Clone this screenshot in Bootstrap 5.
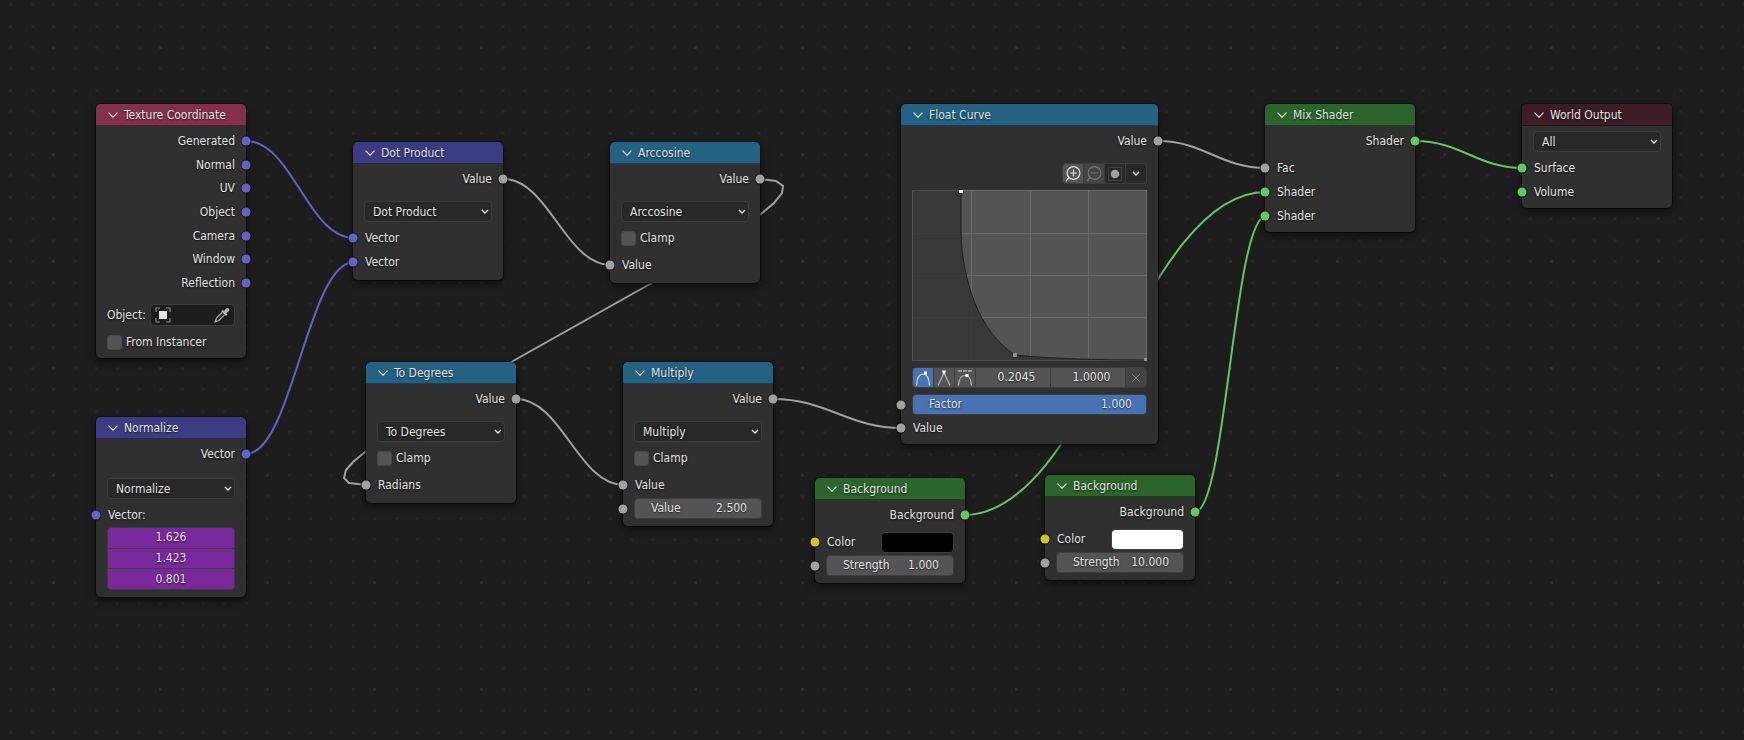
<!DOCTYPE html>
<html lang="en">
<head>
<meta charset="utf-8">
<meta name="viewport" content="width=device-width, initial-scale=1">
<title>World shader nodes</title>
<link href="https://cdn.jsdelivr.net/npm/bootstrap@5.3.0/dist/css/bootstrap.min.css" rel="stylesheet">
<style>
  body { background: #1d1d1d; color: #e2e2e2; font: 12px/22px "DejaVu Sans Condensed", "DejaVu Sans", sans-serif; text-shadow: 0 1px 2px rgba(0,0,0,.7); }
  .editor { min-height: 100vh; min-width: 1690px; }
  .wires { fill: none; stroke-width: 2; }
  .c-vec { --c: #6363c7; } .c-val { --c: #a1a1a1; } .c-shd { --c: #63c763; } .c-col { --c: #c7c729; }
  .wires .wire { stroke: var(--c); }

  .node { width: 150px; background: #303030; border-radius: 5px; box-shadow: 0 0 0 1px rgba(0,0,0,.35), 0 3px 8px rgba(0,0,0,.6); }
  .node-wide { width: 257px; }
  .node-head { height: 22px; padding: 0 0 0 12px; gap: 6px; border-radius: 5px 5px 0 0; border-bottom: 1px solid rgba(0,0,0,.35); background: var(--h); }
  .h-input { --h: #83314a; } .h-vec { --h: #3c3c83; } .h-conv { --h: #246283; } .h-shd { --h: #2b652b; } .h-out { --h: #3c1d26; }
  .node-head h2 { font-size: 12px; line-height: 22px; font-weight: 400; margin: 0; }
  .node-head svg { width: 10px; height: 6px; }
  .node-body { padding: 4px 11px 7px; }
  .pb-tight { padding-bottom: 5px; }
  .line { height: 22px; padding: 0; }
  .reach { margin-left: -11px; margin-right: -11px; padding: 0 11px 0 12px; }
  .reach-field { margin-left: -11px; margin-right: -11px; padding: 0 11px; }
  .outs { height: 164px; }
  .g2 { margin-top: 2px; } .g5 { margin-top: 5px; } .g6 { margin-top: 6px; } .g11 { margin-top: 11px; }
  .g13 { margin-top: 13px; } .g10 { margin-top: 10px; } .g1 { margin-top: 1px; }
  .pin { width: 9px; height: 9px; border-radius: 50%; background: var(--c); box-shadow: 0 0 0 1px rgba(20,20,20,.75); }

  .pick { --bs-form-select-bg-img: url("data:image/svg+xml,%3csvg xmlns='http://www.w3.org/2000/svg' viewBox='0 0 8 6'%3e%3cpath d='M1 1l3 3 3-3' fill='none' stroke='%23e2e2e2' stroke-width='1.4'/%3e%3c/svg%3e");
    height: 21px; padding: 0 16px 0 8px; font: inherit; line-height: 18px; color: inherit; background-color: #282828; background-size: 8px 6px; background-position: right 2px center; border: 1px solid #3d3d3d; border-radius: 4px; text-shadow: inherit; }
  .tick { width: 15px; height: 15px; margin: 0; background-color: #545454; border: 1px solid #484848; border-radius: 3px; }
  .tick + label { padding-left: 4px; }
  .num { height: 21px; padding: 0 14px 0 16px; background: #545454; border: 1px solid #3d3d3d; border-radius: 4px; line-height: 19px; }
  .num-full { background: #4772b3; }
  .num input, .trio input, .cell-in { min-width: 0; width: 60px; padding: 0; border: 0; background: transparent; color: inherit; font: inherit; line-height: 19px; text-shadow: inherit; }
  .trio { border-radius: 4px; overflow: hidden; border: 1px solid #3d3d3d; height: 63px; background: #3d3d3d; gap: 1px; }
  .trio input { flex: 1; width: 100%; text-align: center; background: #79299b; }
  .swatch { width: 73px; height: 21px; padding: 0; border: 1px solid #3d3d3d; border-radius: 4px; overflow: hidden; background: none; appearance: none; }
  .swatch::-webkit-color-swatch-wrapper { padding: 0; }
  .swatch::-webkit-color-swatch { border: 0; border-radius: 3px; }
  .idbox { width: 85px; height: 22px; padding: 0 4px; background: #1d1d1d; border: 1px solid #3d3d3d; border-radius: 4px; }
  .idbox button { border: 0; padding: 0; background: none; display: flex; color: #e2e2e2; }
  .idbox input { flex: 1; min-width: 0; height: 18px; border: 0; padding: 0; background: transparent; color: inherit; }
  .strip { height: 21px; border: 1px solid #3d3d3d; border-radius: 4px; overflow: hidden; gap: 1px; background: #3d3d3d; }
  .strip > * { background: #545454; }
  .strip button { width: 20px; border: 0; padding: 0; display: flex; align-items: center; justify-content: center; flex: none; }
  .strip .on { background: #4772b3; } .strip .dim { background: #444; } .strip .deep { background: #282828; }
  .cell-in { flex: 1; text-align: center; }
  .strip .cell-in { background: #545454; padding-left: 7px; }
  .plot { display: block; width: 100%; height: 171px; }
</style>
</head>
<body>
<main class="editor position-relative overflow-hidden">
  <svg class="wires position-absolute top-0 start-0 w-100 h-100" aria-hidden="true">
    <defs>
      <pattern id="dots" width="107" height="107" patternUnits="userSpaceOnUse">
        <g stroke="#252525" stroke-width="3" stroke-dasharray="3 19 3 18 3 19 3 18 3 18">
          <path d="M9 4.500H107M9 26.500H107M9 68.500H107M9 90.500H107M9 47.500H107"/>
        </g>
        <path d="M52 46h3v3h-3z" fill="#2c2c2c"/>
      </pattern>
    </defs>
    <rect width="100%" height="100%" fill="url(#dots)"/>
    <path class="wire c-vec" d="M246 141C292 141 308 238 354 238"/>
    <path class="wire c-vec" d="M246 454C292 454 308 262 354 262"/>
    <path class="wire c-val" d="M503 179C549 179 565 265 611 265"/>
    <path class="wire c-val" d="M760 179L776 181 783 186 782 193 774 203 761 214 650 284 513 361 365 452 353 462 346 470 344 478 349 483 367 485"/>
    <path class="wire c-val" d="M516 399C562 399 578 485 624 485"/>
    <path class="wire c-val" d="M773 399C827 399 848 428 902 428"/>
    <path class="wire c-val" d="M1158 141C1204 141 1220 168 1266 168"/>
    <path class="wire c-shd" d="M964 515C1088 515 1142 192 1266 192"/>
    <path class="wire c-shd" d="M1195 512C1226 512 1234 216 1266 216"/>
    <path class="wire c-shd" d="M1415 141C1461 141 1477 168 1523 168"/>
    <symbol id="chev" viewBox="0 0 10 6"><path d="M.5 .7L5 5.200 9.500 .7" fill="none" stroke="#e2e2e2" stroke-width="1.200"/></symbol>
  </svg>

  <section class="node position-absolute" style="left:96px;top:104px">
    <header class="node-head h-input d-flex align-items-center"><svg><use href="#chev"/></svg><h2>Texture Coordinate</h2></header>
    <div class="node-body pb-tight">
      <div class="outs d-flex flex-column justify-content-between">
        <div class="line reach position-relative text-end c-vec">Generated<i class="pin position-absolute top-50 start-100 translate-middle"></i></div>
        <div class="line reach position-relative text-end c-vec">Normal<i class="pin position-absolute top-50 start-100 translate-middle"></i></div>
        <div class="line reach position-relative text-end c-vec">UV<i class="pin position-absolute top-50 start-100 translate-middle"></i></div>
        <div class="line reach position-relative text-end c-vec">Object<i class="pin position-absolute top-50 start-100 translate-middle"></i></div>
        <div class="line reach position-relative text-end c-vec">Camera<i class="pin position-absolute top-50 start-100 translate-middle"></i></div>
        <div class="line reach position-relative text-end c-vec">Window<i class="pin position-absolute top-50 start-100 translate-middle"></i></div>
        <div class="line reach position-relative text-end c-vec">Reflection<i class="pin position-absolute top-50 start-100 translate-middle"></i></div>
      </div>
      <div class="g10 d-flex justify-content-between">
        <label for="obj">Object:</label>
        <div class="idbox d-flex align-items-center">
          <svg width="16" height="16" viewBox="0 0 16 16" fill="none"><path d="M1 5V1h4M11 1h4v4M15 11v4h-4M5 15H1v-4" stroke="#8c8c8c" stroke-width="1.200"/><path d="M4 4h8v8H4z" fill="#e6e6e6"/></svg>
          <input id="obj" type="text">
          <button type="button" aria-label="Eyedropper"><svg width="16" height="16" viewBox="0 0 16 16"><path d="M8.200 5.500L2.500 11.200 1.200 14.800 4.800 13.500 10.500 7.800" fill="none" stroke="#b4b4b4" stroke-width="1.200"/><path d="M7.200 4.200l1.300-1.300 1.500 1 2-2.300c1.800-1.800 4.500.9 2.700 2.700l-2.400 2 1 1.500-1.300 1.300z" fill="#b4b4b4"/></svg></button>
        </div>
      </div>
      <div class="g5 line d-flex align-items-center"><input class="form-check-input tick" type="checkbox" id="inst"><label for="inst">From Instancer</label></div>
    </div>
  </section>

  <section class="node position-absolute" style="left:96px;top:417px">
    <header class="node-head h-vec d-flex align-items-center"><svg><use href="#chev"/></svg><h2>Normalize</h2></header>
    <div class="node-body">
      <div class="line reach position-relative text-end c-vec">Vector<i class="pin position-absolute top-50 start-100 translate-middle"></i></div>
      <select class="form-select pick g13" aria-label="Operation"><option>Normalize</option></select>
      <div class="line reach g5 position-relative c-vec">Vector:<i class="pin position-absolute top-50 start-0 translate-middle"></i></div>
      <div class="trio g1 d-flex flex-column">
        <input type="text" value="1.626" aria-label="X"><input type="text" value="1.423" aria-label="Y"><input type="text" value="0.801" aria-label="Z">
      </div>
    </div>
  </section>

  <section class="node position-absolute" style="left:353px;top:142px">
    <header class="node-head h-vec d-flex align-items-center"><svg><use href="#chev"/></svg><h2>Dot Product</h2></header>
    <div class="node-body">
      <div class="line reach position-relative text-end c-val">Value<i class="pin position-absolute top-50 start-100 translate-middle"></i></div>
      <select class="form-select pick g11" aria-label="Operation"><option>Dot Product</option></select>
      <div class="line reach g5 position-relative c-vec">Vector<i class="pin position-absolute top-50 start-0 translate-middle"></i></div>
      <div class="line reach g2 position-relative c-vec">Vector<i class="pin position-absolute top-50 start-0 translate-middle"></i></div>
    </div>
  </section>

  <section class="node position-absolute" style="left:610px;top:142px">
    <header class="node-head h-conv d-flex align-items-center"><svg><use href="#chev"/></svg><h2>Arccosine</h2></header>
    <div class="node-body">
      <div class="line reach position-relative text-end c-val">Value<i class="pin position-absolute top-50 start-100 translate-middle"></i></div>
      <select class="form-select pick g11" aria-label="Operation"><option>Arccosine</option></select>
      <div class="line g5 d-flex align-items-center"><input class="form-check-input tick" type="checkbox" id="cl1"><label for="cl1">Clamp</label></div>
      <div class="line reach g5 position-relative c-val">Value<i class="pin position-absolute top-50 start-0 translate-middle"></i></div>
    </div>
  </section>

  <section class="node position-absolute" style="left:366px;top:362px">
    <header class="node-head h-conv d-flex align-items-center"><svg><use href="#chev"/></svg><h2>To Degrees</h2></header>
    <div class="node-body">
      <div class="line reach position-relative text-end c-val">Value<i class="pin position-absolute top-50 start-100 translate-middle"></i></div>
      <select class="form-select pick g11" aria-label="Operation"><option>To Degrees</option></select>
      <div class="line g5 d-flex align-items-center"><input class="form-check-input tick" type="checkbox" id="cl2"><label for="cl2">Clamp</label></div>
      <div class="line reach g5 position-relative c-val">Radians<i class="pin position-absolute top-50 start-0 translate-middle"></i></div>
    </div>
  </section>

  <section class="node position-absolute" style="left:623px;top:362px">
    <header class="node-head h-conv d-flex align-items-center"><svg><use href="#chev"/></svg><h2>Multiply</h2></header>
    <div class="node-body">
      <div class="line reach position-relative text-end c-val">Value<i class="pin position-absolute top-50 start-100 translate-middle"></i></div>
      <select class="form-select pick g11" aria-label="Operation"><option>Multiply</option></select>
      <div class="line g5 d-flex align-items-center"><input class="form-check-input tick" type="checkbox" id="cl3"><label for="cl3">Clamp</label></div>
      <div class="line reach g5 position-relative c-val">Value<i class="pin position-absolute top-50 start-0 translate-middle"></i></div>
      <div class="reach-field g2 position-relative c-val">
        <div class="num d-flex justify-content-between"><label for="mv">Value</label><input class="text-end" id="mv" type="text" value="2.500"></div>
        <i class="pin position-absolute top-50 start-0 translate-middle"></i>
      </div>
    </div>
  </section>

  <section class="node node-wide position-absolute" style="left:901px;top:104px">
    <header class="node-head h-conv d-flex align-items-center"><svg><use href="#chev"/></svg><h2>Float Curve</h2></header>
    <div class="node-body pb-tight">
      <div class="line reach position-relative text-end c-val">Value<i class="pin position-absolute top-50 start-100 translate-middle"></i></div>
      <div class="g11 d-flex justify-content-end">
        <div class="strip d-flex">
          <button type="button" aria-label="Zoom in"><svg width="16" height="16" viewBox="0 0 16 16" fill="none" stroke="#e2e2e2" stroke-width="1.200"><circle cx="8.500" cy="7" r="6.400"/><path d="M8.500 3.500v7M5 7h7M4 11.500L1 15"/></svg></button>
          <button type="button" class="dim" aria-label="Zoom out"><svg width="16" height="16" viewBox="0 0 16 16" fill="none" stroke="#777" stroke-width="1.200"><circle cx="8.500" cy="7" r="6.400"/><path d="M5 7h7M4 11.500L1 15"/></svg></button>
          <button type="button" class="deep" aria-label="Clipping"><svg width="16" height="16" viewBox="0 0 16 16"><path d="M1.500 1.500h13v13h-13z" fill="none" stroke="#444"/><circle cx="8" cy="8" r="4.300" fill="#a0a0a0"/></svg></button>
          <button type="button" class="deep" aria-label="Tools"><svg width="8" height="6" viewBox="0 0 8 6"><path d="M1 1l3 3 3-3" fill="none" stroke="#e2e2e2" stroke-width="1.400"/></svg></button>
        </div>
      </div>
      <svg class="plot g6" viewBox="0 0 235 171" preserveAspectRatio="none">
        <path d="M0 0h235v171H0z" fill="#545454"/>
        <path d="M59.500 0v171M118.500 0v171M176.500 0v171M0 43.500h235M0 85.500h235M0 127.500h235" stroke="#686868" fill="none"/>
        <path d="M.5 .5h234v170H.5z" stroke="#6c6c6c" fill="none"/>
        <path d="M0 0H49V42C50 90 67 142 103 165C140 169 190 170 235 170V171H0z" fill="#333" fill-opacity=".84"/>
        <path d="M.5 171V.5H49M0 170.500h235" stroke="#505050" fill="none"/>
        <path d="M49 1V42C50 90 67 142 103 165C140 169 190 170 235 170" stroke="#202020" fill="none"/>
        <path d="M47 0h4v3h-4z" fill="#fff"/><path d="M101 163h4v4h-4zM232 168h3v3h-3z" fill="#909090"/>
      </svg>
      <div class="strip g6 d-flex">
        <button type="button" class="on" aria-label="Auto handle"><svg width="18" height="18" viewBox="0 0 18 18" fill="none" stroke="#d8d8d8" stroke-width="1.200"><path d="M2.500 16.500C3 8.500 6 5 9 5s6 3.500 6.500 11.500"/><path d="M10 2.500h3v3h-3z" fill="#fff" stroke="none"/></svg></button>
        <button type="button" aria-label="Vector handle"><svg width="18" height="18" viewBox="0 0 18 18" fill="none" stroke="#b8b8b8" stroke-width="1.200"><path d="M3 16.500L9 4l6 12.500"/><path d="M7.500 1.500h3v3h-3z" fill="#fff" stroke="none"/></svg></button>
        <button type="button" aria-label="Auto clamped handle"><svg width="18" height="18" viewBox="0 0 18 18" fill="none" stroke="#b8b8b8" stroke-width="1.200"><path d="M2.500 16.500C3 9 6 6.500 9 6.500s6 2.500 6.500 10"/><path d="M2 2h14" stroke="#e2e2e2" stroke-dasharray="4 1"/><path d="M9.500 5h3v3h-3z" fill="#fff" stroke="none"/></svg></button>
        <input class="cell-in" type="text" value="0.2045" aria-label="Point X"><input class="cell-in" type="text" value="1.0000" aria-label="Point Y">
        <button type="button" class="dim" aria-label="Delete point"><svg width="10" height="10" viewBox="0 0 10 10"><path d="M1 1l8 8M9 1L1 9" stroke="#808080"/></svg></button>
      </div>
      <div class="reach-field g6 position-relative c-val">
        <div class="num num-full d-flex justify-content-between"><label for="fac">Factor</label><input class="text-end" id="fac" type="text" value="1.000"></div>
        <i class="pin position-absolute top-50 start-0 translate-middle"></i>
      </div>
      <div class="line reach g2 position-relative c-val">Value<i class="pin position-absolute top-50 start-0 translate-middle"></i></div>
    </div>
  </section>

  <section class="node position-absolute" style="left:815px;top:478px">
    <header class="node-head h-shd d-flex align-items-center"><svg><use href="#chev"/></svg><h2>Background</h2></header>
    <div class="node-body">
      <div class="line reach position-relative text-end c-shd">Background<i class="pin position-absolute top-50 start-100 translate-middle"></i></div>
      <div class="line reach g5 position-relative d-flex align-items-center justify-content-between c-col"><label for="c1">Color</label><input class="swatch" id="c1" type="color" value="#000000"><i class="pin position-absolute top-50 start-0 translate-middle"></i></div>
      <div class="reach-field g2 position-relative c-val">
        <div class="num d-flex justify-content-between"><label for="s1">Strength</label><input class="text-end" id="s1" type="text" value="1.000"></div>
        <i class="pin position-absolute top-50 start-0 translate-middle"></i>
      </div>
    </div>
  </section>

  <section class="node position-absolute" style="left:1045px;top:475px">
    <header class="node-head h-shd d-flex align-items-center"><svg><use href="#chev"/></svg><h2>Background</h2></header>
    <div class="node-body">
      <div class="line reach position-relative text-end c-shd">Background<i class="pin position-absolute top-50 start-100 translate-middle"></i></div>
      <div class="line reach g5 position-relative d-flex align-items-center justify-content-between c-col"><label for="c2">Color</label><input class="swatch" id="c2" type="color" value="#ffffff"><i class="pin position-absolute top-50 start-0 translate-middle"></i></div>
      <div class="reach-field g2 position-relative c-val">
        <div class="num d-flex justify-content-between"><label for="s2">Strength</label><input class="text-end" id="s2" type="text" value="10.000"></div>
        <i class="pin position-absolute top-50 start-0 translate-middle"></i>
      </div>
    </div>
  </section>

  <section class="node position-absolute" style="left:1265px;top:104px">
    <header class="node-head h-shd d-flex align-items-center"><svg><use href="#chev"/></svg><h2>Mix Shader</h2></header>
    <div class="node-body pb-tight">
      <div class="line reach position-relative text-end c-shd">Shader<i class="pin position-absolute top-50 start-100 translate-middle"></i></div>
      <div class="line reach g5 position-relative c-val">Fac<i class="pin position-absolute top-50 start-0 translate-middle"></i></div>
      <div class="line reach g2 position-relative c-shd">Shader<i class="pin position-absolute top-50 start-0 translate-middle"></i></div>
      <div class="line reach g2 position-relative c-shd">Shader<i class="pin position-absolute top-50 start-0 translate-middle"></i></div>
    </div>
  </section>

  <section class="node position-absolute" style="left:1522px;top:104px">
    <header class="node-head h-out d-flex align-items-center"><svg><use href="#chev"/></svg><h2>World Output</h2></header>
    <div class="node-body pb-tight">
      <select class="form-select pick g1" aria-label="Target"><option>All</option></select>
      <div class="line reach g5 position-relative c-shd">Surface<i class="pin position-absolute top-50 start-0 translate-middle"></i></div>
      <div class="line reach g2 position-relative c-shd">Volume<i class="pin position-absolute top-50 start-0 translate-middle"></i></div>
    </div>
  </section>
</main>
<script src="https://cdn.jsdelivr.net/npm/bootstrap@5.3.0/dist/js/bootstrap.bundle.min.js"></script>
</body>
</html>
